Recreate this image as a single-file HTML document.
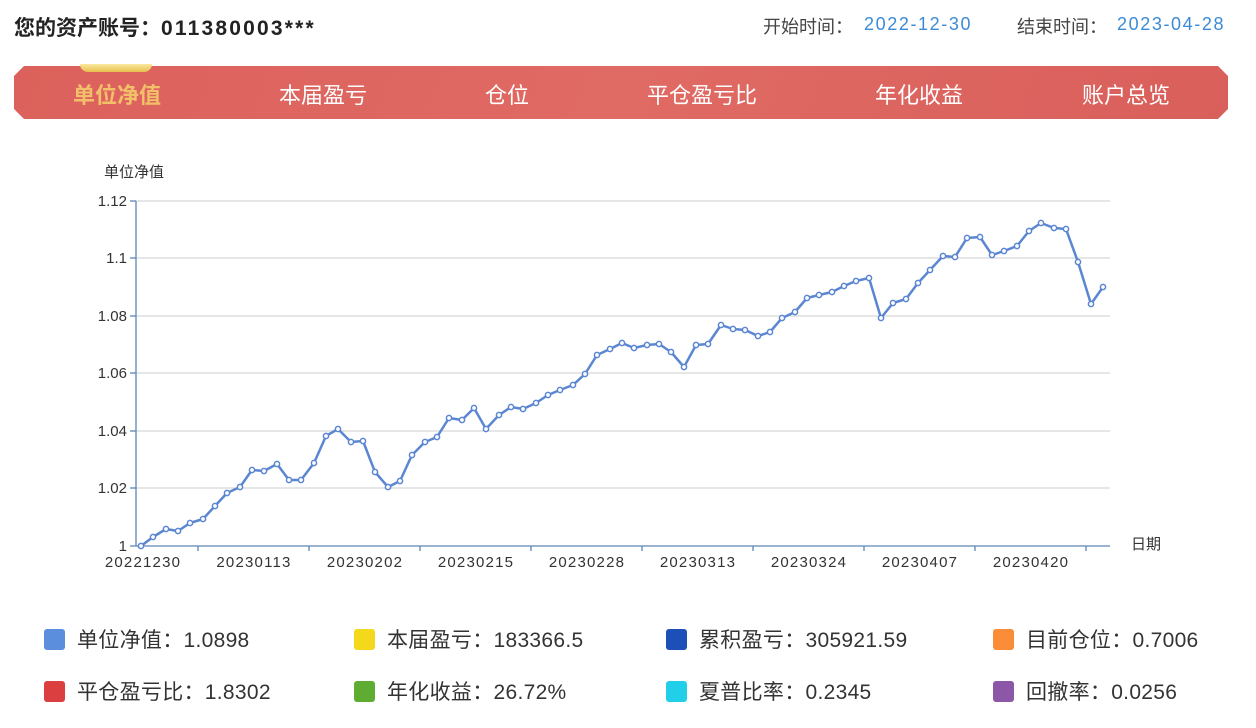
<!DOCTYPE html>
<html><head><meta charset="utf-8"><style>
body{margin:0;width:1256px;height:728px;background:#fff;font-family:"Liberation Sans","Noto Sans CJK SC",sans-serif;position:relative;overflow:hidden;color:#333}
.a{position:absolute;white-space:nowrap}
.t{font-size:21px;font-weight:bold;color:#222;left:14px;top:12px}
.t span{letter-spacing:2.2px}
.r{font-size:18px;top:13px;color:#444}
.b{color:#3b8bd6;letter-spacing:1.6px;top:14px}
.nav{position:absolute;left:14px;top:66px;width:1214px;height:53px;background:linear-gradient(110deg,#dc615c,#e06a64 50%,#d95f5b);clip-path:polygon(10px 0,1204px 0,1214px 10px,1214px 43px,1204px 53px,10px 53px,0 43px,0 10px)}
.tab{position:absolute;top:78px;font-size:22px;color:#fff;transform:translateX(-50%)}
.leg{position:absolute;font-size:21px;color:#333;white-space:nowrap;letter-spacing:0.3px}
.leg i{display:inline-block;width:21px;height:21px;border-radius:3px;vertical-align:-3px;margin-right:12px}
</style></head><body>
<div class="a t">您的资产账号：<span>011380003***</span></div>
<div class="a r" style="left:763px">开始时间：</div><div class="a r b" style="left:864px">2022-12-30</div>
<div class="a r" style="left:1017px">结束时间：</div><div class="a r b" style="left:1117px">2023-04-28</div>
<div class="nav"></div>
<div class="a" style="left:80px;top:64px;width:72px;height:8px;background:linear-gradient(#f9e9a0,#e8c04e);border-radius:0 0 10px 10px"></div>
<div class="tab" style="left:117px;color:#f3bf6a;font-weight:bold">单位净值</div>
<div class="tab" style="left:323px">本届盈亏</div>
<div class="tab" style="left:507px">仓位</div>
<div class="tab" style="left:702px">平仓盈亏比</div>
<div class="tab" style="left:919px">年化收益</div>
<div class="tab" style="left:1126px">账户总览</div>
<svg class="a" style="left:0;top:0" width="1256" height="600" font-family="Liberation Sans,Noto Sans CJK SC,sans-serif" font-size="15" fill="#333">
<text x="104" y="177" font-size="15">单位净值</text>
<g stroke="#ccc" stroke-width="1">
<line x1="136" y1="201" x2="1110" y2="201"/><line x1="136" y1="258" x2="1110" y2="258"/><line x1="136" y1="316" x2="1110" y2="316"/><line x1="136" y1="373" x2="1110" y2="373"/><line x1="136" y1="431" x2="1110" y2="431"/><line x1="136" y1="488" x2="1110" y2="488"/></g>
<g stroke="#5a87b8" stroke-width="1.3"><line x1="136" y1="201" x2="136" y2="546"/><line x1="130" y1="546" x2="1110" y2="546"/>
<line x1="130" y1="201" x2="136" y2="201"/><line x1="130" y1="258" x2="136" y2="258"/><line x1="130" y1="316" x2="136" y2="316"/><line x1="130" y1="373" x2="136" y2="373"/><line x1="130" y1="431" x2="136" y2="431"/><line x1="130" y1="488" x2="136" y2="488"/>
<line x1="198" y1="546" x2="198" y2="551"/><line x1="309" y1="546" x2="309" y2="551"/><line x1="420" y1="546" x2="420" y2="551"/><line x1="531" y1="546" x2="531" y2="551"/><line x1="642" y1="546" x2="642" y2="551"/><line x1="753" y1="546" x2="753" y2="551"/><line x1="864" y1="546" x2="864" y2="551"/><line x1="975" y1="546" x2="975" y2="551"/><line x1="1086" y1="546" x2="1086" y2="551"/></g>
<g text-anchor="end"><text x="127" y="206">1.12</text><text x="127" y="263">1.1</text><text x="127" y="321">1.08</text><text x="127" y="378">1.06</text><text x="127" y="436">1.04</text><text x="127" y="493">1.02</text><text x="127" y="551">1</text></g>
<g text-anchor="middle" letter-spacing="1.2"><text x="143" y="567">20221230</text><text x="254" y="567">20230113</text><text x="365" y="567">20230202</text><text x="476" y="567">20230215</text><text x="587" y="567">20230228</text><text x="698" y="567">20230313</text><text x="809" y="567">20230324</text><text x="920" y="567">20230407</text><text x="1031" y="567">20230420</text></g>
<text x="1131" y="549">日期</text>
<polyline id="p" fill="none" stroke="#5b86d2" stroke-width="2.5" stroke-linejoin="round" points="141,546 153,537 166,529 178,531 190,523 203,519 215,506 227,493 240,487 252,470 264,471 277,464 289,480 301,480 314,463 326,436 338,429 351,442 363,441 375,472 388,487 400,481 412,455 425,442 437,437 449,418 462,420 474,408 486,429 499,415 511,407 523,409 536,403 548,395 560,390 573,385 585,374 597,355 610,349 622,343 634,348 647,345 659,344 671,352 684,367 696,345 708,344 721,325 733,329 745,330 758,336 770,332 782,318 795,312 807,298 819,295 832,292 844,286 856,281 869,278 881,318 893,303 906,299 918,283 930,270 943,256 955,257 967,238 980,237 992,255 1004,251 1017,246 1029,231 1041,223 1054,228 1066,229 1078,262 1091,304 1103,287"/>
<g fill="#fff" stroke="#5b86d2" stroke-width="1.5" id="dots"></g>
</svg>
<script>
var pts=document.getElementById('p').getAttribute('points').trim().split(/\s+/),g=document.getElementById('dots'),s='';
pts.forEach(function(p){var c=p.split(',');s+='<circle cx="'+c[0]+'" cy="'+c[1]+'" r="2.6"/>';});g.innerHTML=s;
</script>
<div class="leg" style="left:44px;top:624px"><i style="background:#5b8fdd"></i>单位净值：1.0898</div>
<div class="leg" style="left:354px;top:624px"><i style="background:#f4d81c"></i>本届盈亏：183366.5</div>
<div class="leg" style="left:666px;top:624px"><i style="background:#1c4fb8"></i>累积盈亏：305921.59</div>
<div class="leg" style="left:993px;top:624px"><i style="background:#fb8c38"></i>目前仓位：0.7006</div>
<div class="leg" style="left:44px;top:676px"><i style="background:#db3f3f"></i>平仓盈亏比：1.8302</div>
<div class="leg" style="left:354px;top:676px"><i style="background:#5fac33"></i>年化收益：26.72%</div>
<div class="leg" style="left:666px;top:676px"><i style="background:#22cfe8"></i>夏普比率：0.2345</div>
<div class="leg" style="left:993px;top:676px"><i style="background:#8b57a6"></i>回撤率：0.0256</div>
</body></html>
